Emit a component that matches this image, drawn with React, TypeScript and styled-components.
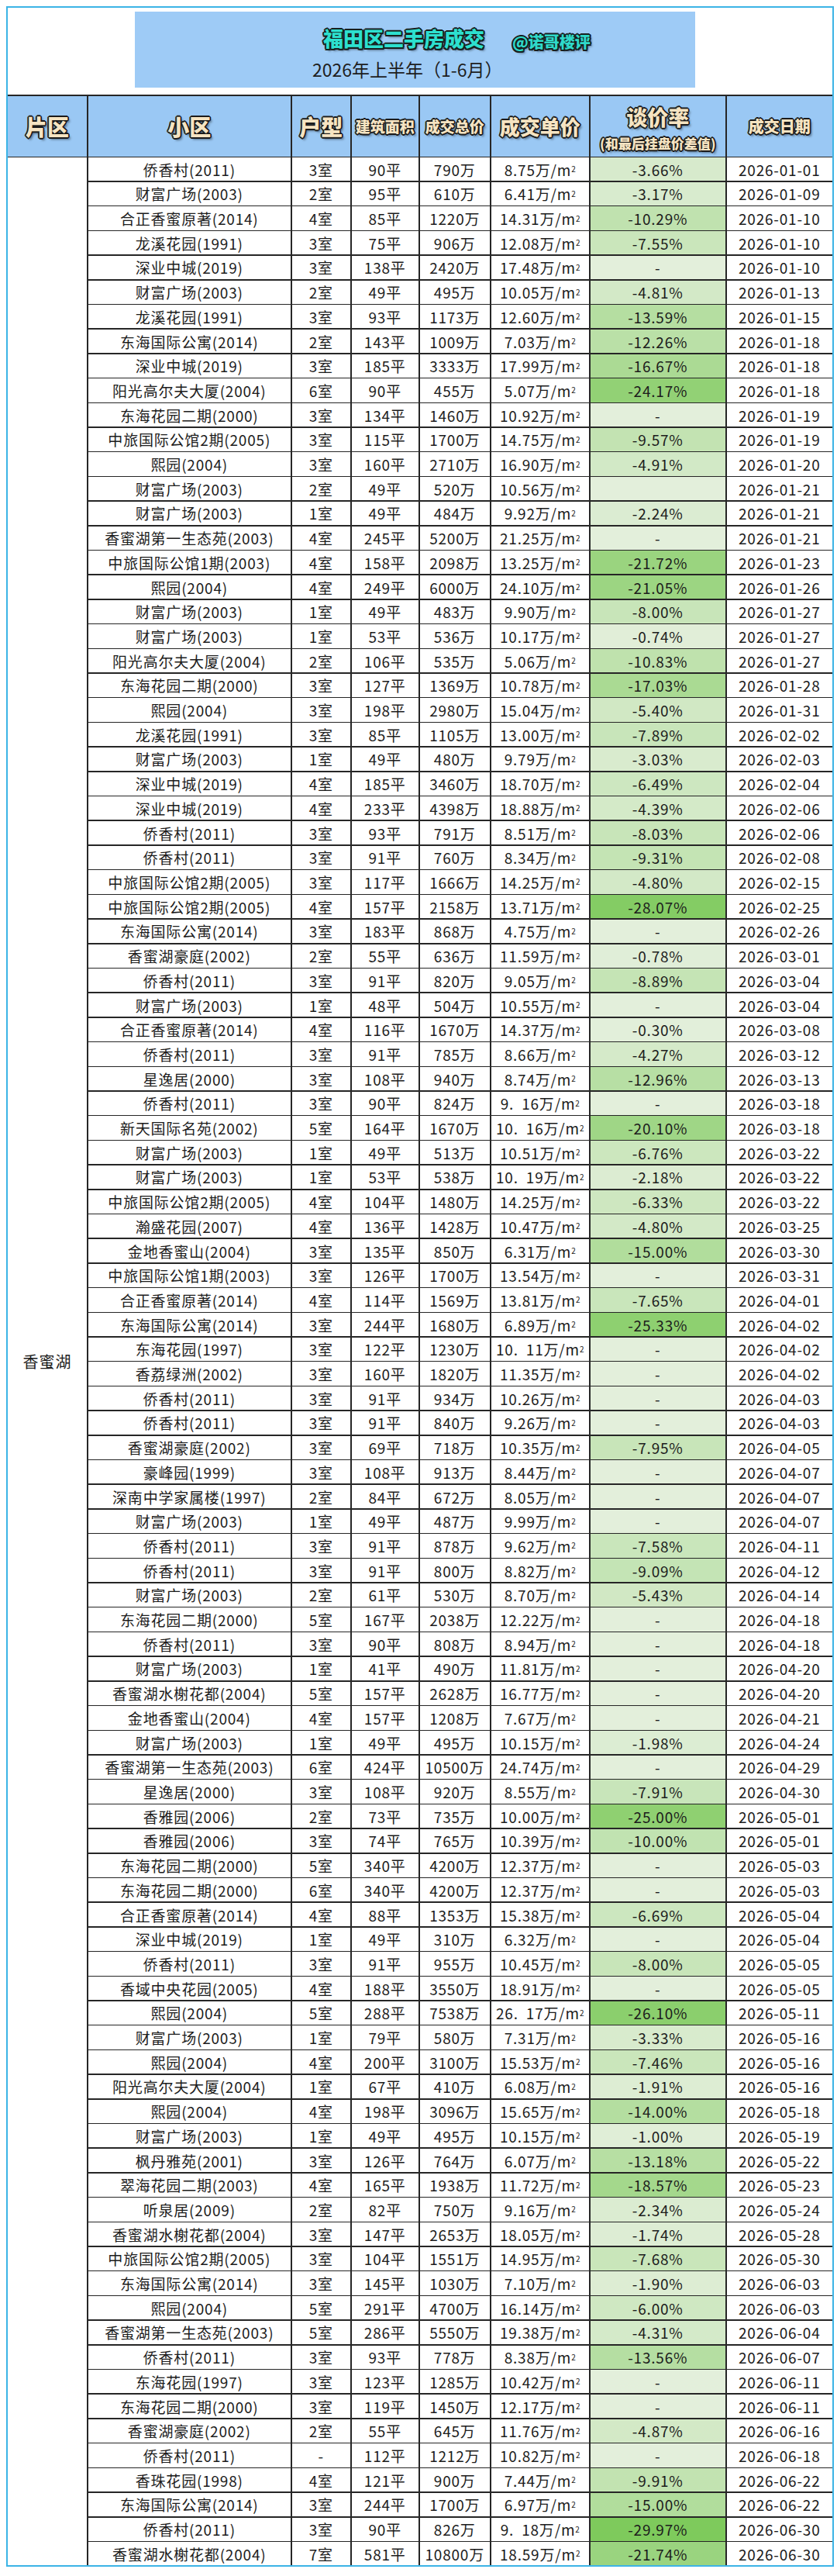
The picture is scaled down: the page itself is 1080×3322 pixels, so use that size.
import styled, { createGlobalStyle } from "styled-components";

const GlobalStyle = createGlobalStyle`
  body {
    margin: 0;
    background: #fff;
    font-family: "Noto Sans CJK SC", "Noto Sans", sans-serif;
    color: #1c1c1c;
  }
`;

const COLS =
  "102px 261.5px 75.5px 86.5px 90.5px 126.5px 174.5px 136.5px";

const outline = (c: string, w: number) =>
  [
    `${-w}px ${-w}px 0 ${c}`,
    `${w}px ${-w}px 0 ${c}`,
    `${-w}px ${w}px 0 ${c}`,
    `${w}px ${w}px 0 ${c}`,
    `0 ${-w - 0.5}px 0 ${c}`,
    `0 ${w + 0.5}px 0 ${c}`,
    `${-w - 0.5}px 0 0 ${c}`,
    `${w + 0.5}px 0 0 ${c}`,
    `2.5px 3px 3px rgba(0, 0, 0, 0.45)`,
  ].join(", ");

const Frame = styled.div`
  margin: 8px 0 0 8px;
  width: 1064px;
  border: 2px solid #3cb4e6;
  background: #fff;
`;

const TitleWrap = styled.div`
  padding: 5px 0 9px 164px;
`;

const TitleBox = styled.div`
  width: 723px;
  height: 98px;
  background: #9ecbf6;
  display: flex;
  flex-direction: column;
`;

const TitleLine = styled.div`
  display: flex;
  align-items: center;
  height: 40px;
  margin-top: 14px;
  padding-left: 243px;
  gap: 36px;
`;

const Title = styled.span`
  font-size: 26px;
  font-weight: 900;
  line-height: 1;
  color: #2de0cf;
  text-shadow: ${outline("#17201f", 1.5)};
`;

const Handle = styled.span`
  padding-top: 10px;
  font-size: 20px;
  font-weight: 900;
  line-height: 1;
  color: #2fd9c9;
  text-shadow: ${outline("#17201f", 1.5)};
`;

const Subtitle = styled.div`
  margin-top: 6px;
  padding-left: 229px;
  font-size: 23px;
  line-height: 28px;
  color: #1e1e1e;
`;

const Grid = styled.div`
  display: grid;
  grid-template-columns: ${COLS};
  grid-template-rows: 77.5px repeat(98, 30.21px);
  gap: 1.5px;
  background: #262626;
  border-top: 2px solid #262626;
`;

const HeadCell = styled.div<{ $size: number }>`
  background: #9ac8f4;
  display: flex;
  align-items: center;
  justify-content: center;
  font-size: ${(p) => p.$size}px;
  font-weight: 900;
  color: #f6e4c2;
  white-space: nowrap;
  text-shadow: ${outline("#1b1b1b", 1.3)};
`;

const RateHead = styled(HeadCell)`
  flex-direction: column;
  justify-content: flex-start;
`;

const RateTitle = styled.span`
  margin-top: 12px;
  line-height: 30px;
`;

const RateNote = styled.span`
  margin-top: 8px;
  font-size: 17px;
  line-height: 22px;
`;

const AreaCell = styled.div`
  grid-column: 1;
  grid-row: 2 / span 98;
  background: #fff;
  display: flex;
  align-items: center;
  justify-content: center;
  font-size: 20px;
  letter-spacing: 1px;
`;

const Cell = styled.div`
  background: #fff;
  display: flex;
  align-items: center;
  justify-content: center;
  font-size: 19px;
  letter-spacing: 0.8px;
  white-space: pre;
  overflow: visible;
`;

const RateCell = styled(Cell)<{ $bg: string }>`
  background: ${(p) => p.$bg};
`;

const Sup = styled.sup`
  font-size: 10px;
  line-height: 0;
  vertical-align: 8px;
  letter-spacing: 0;
`;

const RAW = `侨香村(2011)|3室|90|790|8.75|-3.66|01-01
财富广场(2003)|2室|95|610|6.41|-3.17|01-09
合正香蜜原著(2014)|4室|85|1220|14.31|-10.29|01-10
龙溪花园(1991)|3室|75|906|12.08|-7.55|01-10
深业中城(2019)|3室|138|2420|17.48|-|01-10
财富广场(2003)|2室|49|495|10.05|-4.81|01-13
龙溪花园(1991)|3室|93|1173|12.60|-13.59|01-15
东海国际公寓(2014)|2室|143|1009|7.03|-12.26|01-18
深业中城(2019)|3室|185|3333|17.99|-16.67|01-18
阳光高尔夫大厦(2004)|6室|90|455|5.07|-24.17|01-18
东海花园二期(2000)|3室|134|1460|10.92|-|01-19
中旅国际公馆2期(2005)|3室|115|1700|14.75|-9.57|01-19
熙园(2004)|3室|160|2710|16.90|-4.91|01-20
财富广场(2003)|2室|49|520|10.56||01-21
财富广场(2003)|1室|49|484|9.92|-2.24|01-21
香蜜湖第一生态苑(2003)|4室|245|5200|21.25|-|01-21
中旅国际公馆1期(2003)|4室|158|2098|13.25|-21.72|01-23
熙园(2004)|4室|249|6000|24.10|-21.05|01-26
财富广场(2003)|1室|49|483|9.90|-8.00|01-27
财富广场(2003)|1室|53|536|10.17|-0.74|01-27
阳光高尔夫大厦(2004)|2室|106|535|5.06|-10.83|01-27
东海花园二期(2000)|3室|127|1369|10.78|-17.03|01-28
熙园(2004)|3室|198|2980|15.04|-5.40|01-31
龙溪花园(1991)|3室|85|1105|13.00|-7.89|02-02
财富广场(2003)|1室|49|480|9.79|-3.03|02-03
深业中城(2019)|4室|185|3460|18.70|-6.49|02-04
深业中城(2019)|4室|233|4398|18.88|-4.39|02-06
侨香村(2011)|3室|93|791|8.51|-8.03|02-06
侨香村(2011)|3室|91|760|8.34|-9.31|02-08
中旅国际公馆2期(2005)|3室|117|1666|14.25|-4.80|02-15
中旅国际公馆2期(2005)|4室|157|2158|13.71|-28.07|02-25
东海国际公寓(2014)|3室|183|868|4.75|-|02-26
香蜜湖豪庭(2002)|2室|55|636|11.59|-0.78|03-01
侨香村(2011)|3室|91|820|9.05|-8.89|03-04
财富广场(2003)|1室|48|504|10.55|-|03-04
合正香蜜原著(2014)|4室|116|1670|14.37|-0.30|03-08
侨香村(2011)|3室|91|785|8.66|-4.27|03-12
星逸居(2000)|3室|108|940|8.74|-12.96|03-13
侨香村(2011)|3室|90|824|9.  16|-|03-18
新天国际名苑(2002)|5室|164|1670|10.  16|-20.10|03-18
财富广场(2003)|1室|49|513|10.51|-6.76|03-22
财富广场(2003)|1室|53|538|10.  19|-2.18|03-22
中旅国际公馆2期(2005)|4室|104|1480|14.25|-6.33|03-22
瀚盛花园(2007)|4室|136|1428|10.47|-4.80|03-25
金地香蜜山(2004)|3室|135|850|6.31|-15.00|03-30
中旅国际公馆1期(2003)|3室|126|1700|13.54|-|03-31
合正香蜜原著(2014)|4室|114|1569|13.81|-7.65|04-01
东海国际公寓(2014)|3室|244|1680|6.89|-25.33|04-02
东海花园(1997)|3室|122|1230|10.  11|-|04-02
香荔绿洲(2002)|3室|160|1820|11.35|-|04-02
侨香村(2011)|3室|91|934|10.26|-|04-03
侨香村(2011)|3室|91|840|9.26|-|04-03
香蜜湖豪庭(2002)|3室|69|718|10.35|-7.95|04-05
豪峰园(1999)|3室|108|913|8.44|-|04-07
深南中学家属楼(1997)|2室|84|672|8.05|-|04-07
财富广场(2003)|1室|49|487|9.99|-|04-07
侨香村(2011)|3室|91|878|9.62|-7.58|04-11
侨香村(2011)|3室|91|800|8.82|-9.09|04-12
财富广场(2003)|2室|61|530|8.70|-5.43|04-14
东海花园二期(2000)|5室|167|2038|12.22|-|04-18
侨香村(2011)|3室|90|808|8.94|-|04-18
财富广场(2003)|1室|41|490|11.81|-|04-20
香蜜湖水榭花都(2004)|5室|157|2628|16.77|-|04-20
金地香蜜山(2004)|4室|157|1208|7.67|-|04-21
财富广场(2003)|1室|49|495|10.15|-1.98|04-24
香蜜湖第一生态苑(2003)|6室|424|10500|24.74|-|04-29
星逸居(2000)|3室|108|920|8.55|-7.91|04-30
香雅园(2006)|2室|73|735|10.00|-25.00|05-01
香雅园(2006)|3室|74|765|10.39|-10.00|05-01
东海花园二期(2000)|5室|340|4200|12.37|-|05-03
东海花园二期(2000)|6室|340|4200|12.37|-|05-03
合正香蜜原著(2014)|4室|88|1353|15.38|-6.69|05-04
深业中城(2019)|1室|49|310|6.32|-|05-04
侨香村(2011)|3室|91|955|10.45|-8.00|05-05
香域中央花园(2005)|4室|188|3550|18.91|-|05-05
熙园(2004)|5室|288|7538|26.  17|-26.10|05-11
财富广场(2003)|1室|79|580|7.31|-3.33|05-16
熙园(2004)|4室|200|3100|15.53|-7.46|05-16
阳光高尔夫大厦(2004)|1室|67|410|6.08|-1.91|05-16
熙园(2004)|4室|198|3096|15.65|-14.00|05-18
财富广场(2003)|1室|49|495|10.15|-1.00|05-19
枫丹雅苑(2001)|3室|126|764|6.07|-13.18|05-22
翠海花园二期(2003)|4室|165|1938|11.72|-18.57|05-23
听泉居(2009)|2室|82|750|9.16|-2.34|05-24
香蜜湖水榭花都(2004)|3室|147|2653|18.05|-1.74|05-28
中旅国际公馆2期(2005)|3室|104|1551|14.95|-7.68|05-30
东海国际公寓(2014)|3室|145|1030|7.10|-1.90|06-03
熙园(2004)|5室|291|4700|16.14|-6.00|06-03
香蜜湖第一生态苑(2003)|5室|286|5550|19.38|-4.31|06-04
侨香村(2011)|3室|93|778|8.38|-13.56|06-07
东海花园(1997)|3室|123|1285|10.42|-|06-11
东海花园二期(2000)|3室|119|1450|12.17|-|06-11
香蜜湖豪庭(2002)|2室|55|645|11.76|-4.87|06-16
侨香村(2011)|-|112|1212|10.82|-|06-18
香珠花园(1998)|4室|121|900|7.44|-9.91|06-22
东海国际公寓(2014)|3室|244|1700|6.97|-15.00|06-22
侨香村(2011)|3室|90|826|9.  18|-29.97|06-30
香蜜湖水榭花都(2004)|7室|581|10800|18.59|-21.74|06-30`;

const rows = RAW.split("\n").map((line) => {
  const [name, room, area, total, unit, rate, date] = line.split("|");
  return { name, room, area, total, unit, rate, date };
});

// pale green at 0%, stronger green towards -30%
const rateColor = (rate: string) => {
  const v = parseFloat(rate);
  const t = isNaN(v) ? 0 : Math.min(Math.abs(v) / 30, 1);
  const from = [227, 239, 219];
  const to = [126, 202, 92];
  const c = from.map((f, i) => Math.round(f + (to[i] - f) * t));
  return `rgb(${c[0]}, ${c[1]}, ${c[2]})`;
};

const rateText = (rate: string) =>
  rate === "" || rate === "-" ? rate : `${rate}%`;

export default function App() {
  return (
    <>
      <GlobalStyle />
      <Frame>
        <TitleWrap>
          <TitleBox>
            <TitleLine>
              <Title>福田区二手房成交</Title>
              <Handle>@诺哥楼评</Handle>
            </TitleLine>
            <Subtitle>2026年上半年（1-6月）</Subtitle>
          </TitleBox>
        </TitleWrap>

        <Grid>
          <HeadCell $size={28}>片区</HeadCell>
          <HeadCell $size={28}>小区</HeadCell>
          <HeadCell $size={28}>户型</HeadCell>
          <HeadCell $size={19}>建筑面积</HeadCell>
          <HeadCell $size={19}>成交总价</HeadCell>
          <HeadCell $size={26}>成交单价</HeadCell>
          <RateHead $size={27}>
            <RateTitle>谈价率</RateTitle>
            <RateNote>(和最后挂盘价差值)</RateNote>
          </RateHead>
          <HeadCell $size={20}>成交日期</HeadCell>

          <AreaCell>香蜜湖</AreaCell>
          {rows.map((r, i) => [
            <Cell key={`n${i}`}>{r.name}</Cell>,
            <Cell key={`r${i}`}>{r.room}</Cell>,
            <Cell key={`a${i}`}>{r.area}平</Cell>,
            <Cell key={`t${i}`}>{r.total}万</Cell>,
            <Cell key={`u${i}`}>
              {r.unit}万/m<Sup>2</Sup>
            </Cell>,
            <RateCell key={`p${i}`} $bg={rateColor(r.rate)}>
              {rateText(r.rate)}
            </RateCell>,
            <Cell key={`d${i}`}>2026-{r.date}</Cell>,
          ])}
        </Grid>
      </Frame>
    </>
  );
}
